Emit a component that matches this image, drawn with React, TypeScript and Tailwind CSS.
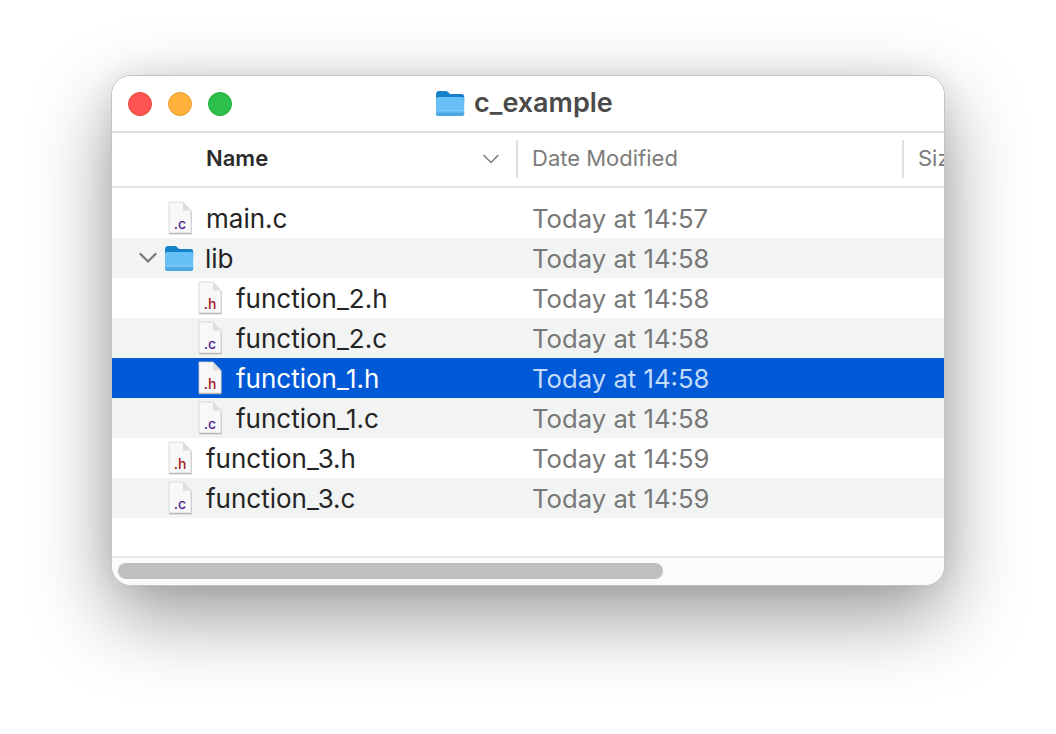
import React from "react";

function Folder({ w, h }: { w: number; h: number }) {
  return (
    <svg width={w} height={h} viewBox="0 0 30 28" className="shrink-0">
      <path d="M1 5.5C1 3.5 2 2 4 2H10.5C12 2 12.5 2.5 13.5 3.5L15 5H26.5C28.2 5 29.2 6 29.2 7.7V14H1Z" fill="#1681c9" />
      <path d="M1 10.2C1 8.8 1.8 8 3.2 8H27C28.4 8 29.2 8.8 29.2 10.2V24.5C29.2 26 28.3 27 26.8 27H3.4C1.9 27 1 26 1 24.5Z" fill="#66c0f6" />
      <rect x="1" y="21" width="28.2" height="1" fill="#7cc9f7" />
      <path d="M1 23.5H29.2V24.5C29.2 26 28.3 27 26.8 27H3.4C1.9 27 1 26 1 24.5Z" fill="#4aa6e2" />
    </svg>
  );
}

function FileIcon({ ext }: { ext: "c" | "h" }) {
  return (
    <div className="relative h-[34px] w-[26px] shrink-0">
      <svg width="26" height="34" viewBox="0 0 26 34" className="absolute left-0 top-0">
        <path d="M2 1.5H16L24.5 10V32.5H2Z" fill="#a8a8a8" transform="translate(0 0.8)" />
        <path d="M2 1H16L24 9.5V32H2Z" fill="#f9f8f9" stroke="#d2d2d2" strokeWidth="0.8" />
        <path d="M16 1V9.5H24Z" fill="#dedede" />
      </svg>
      <span
        className={`absolute bottom-[3px] left-0 right-0 text-center text-[14px] leading-[16px] font-medium ${
          ext === "c" ? "text-[#4c1d95]" : "text-[#a3161c]"
        }`}
      >
        .{ext}
      </span>
    </div>
  );
}

type Row = { name: string; date: string; level: 0 | 1; ext: "c" | "h" | "dir"; shade?: boolean; sel?: boolean };

const rows: Row[] = [
  { name: "main.c", date: "Today at 14:57", level: 0, ext: "c" },
  { name: "lib", date: "Today at 14:58", level: 0, ext: "dir", shade: true },
  { name: "function_2.h", date: "Today at 14:58", level: 1, ext: "h" },
  { name: "function_2.c", date: "Today at 14:58", level: 1, ext: "c", shade: true },
  { name: "function_1.h", date: "Today at 14:58", level: 1, ext: "h", sel: true },
  { name: "function_1.c", date: "Today at 14:58", level: 1, ext: "c", shade: true },
  { name: "function_3.h", date: "Today at 14:59", level: 0, ext: "h" },
  { name: "function_3.c", date: "Today at 14:59", level: 0, ext: "c", shade: true },
];

function FileRow({ r }: { r: Row }) {
  const bg = r.sel ? "bg-[#0059d6]" : r.shade ? "bg-[#f2f4f4]" : "bg-white";
  return (
    <div className={`flex h-10 items-center ${bg}`}>
      <div className={`flex w-[420px] shrink-0 items-center ${r.level === 1 ? "pl-[85px]" : r.ext === "dir" ? "pl-[26px]" : "pl-[55px]"}`}>
        {r.ext === "dir" ? (
          <>
            <svg width="20" height="12" viewBox="0 0 20 12" className="mr-[6px] shrink-0">
              <path d="M2.5 2L10 9.5L17.5 2" fill="none" stroke="#777777" strokeWidth="2.2" strokeLinecap="round" strokeLinejoin="round" />
            </svg>
            <Folder w={30} h={28} />
          </>
        ) : (
          <FileIcon ext={r.ext} />
        )}
        <span className={`pt-[2px] text-[26px] leading-none ${r.ext === "dir" ? "ml-[11px]" : "ml-[13px]"} ${r.sel ? "text-white" : "text-[#242424]"}`}>
          {r.name}
        </span>
      </div>
      <span className={`pt-[2px] text-[25.7px] leading-none ${r.sel ? "text-[#c3dcfa]" : "text-[#777777]"}`}>{r.date}</span>
    </div>
  );
}

export default function App() {
  return (
    <div className="flex h-[734px] w-[1056px] items-start overflow-hidden bg-white pl-[111px] pt-[75px] font-['Inter','Liberation_Sans',sans-serif]">
      <div className="flex h-[511px] w-[834px] flex-col overflow-hidden rounded-[20px] border border-[#c4c4c4] bg-white shadow-[0_30px_80px_rgba(0,0,0,0.4),0_0_30px_rgba(0,0,0,0.08)]">
        <div className="relative flex h-[57px] shrink-0 items-center gap-[16px] border-b-2 border-[#e0e0e0] bg-white pl-[16px]">
          <div className="h-6 w-6 rounded-full border border-[#e0443e] bg-[#ff5552]" />
          <div className="h-6 w-6 rounded-full border border-[#e09e2c] bg-[#ffb13c]" />
          <div className="h-6 w-6 rounded-full border border-[#21a83a] bg-[#2cc04a]" />
          <div className="absolute left-[323px] top-[12px] flex items-center gap-[9px]">
            <Folder w={30} h={28} />
            <span className="text-[27px] leading-[30px] font-semibold text-[#4a4a4a]">c_example</span>
          </div>
        </div>
        <div className="flex h-[55px] shrink-0 items-center border-b-2 border-[#e3e3e3] bg-white pb-[1px]">
          <div className="flex w-[404px] shrink-0 items-center justify-between pl-[94px] pr-[16px]">
            <span className="pb-[2px] text-[22px] leading-none font-semibold text-[#2b2b2b]">Name</span>
            <svg width="18" height="12" viewBox="0 0 18 12">
              <path d="M2 2.5L9 9.5L16 2.5" fill="none" stroke="#808080" strokeWidth="1.6" strokeLinecap="round" strokeLinejoin="round" />
            </svg>
          </div>
          <div className="h-[38px] w-[2px] shrink-0 bg-[#e0e0e0]" />
          <div className="w-[384px] shrink-0 pb-[2px] pl-[14px] text-[22px] leading-none text-[#7c7c7c]">Date Modified</div>
          <div className="h-[38px] w-[2px] shrink-0 bg-[#e0e0e0]" />
          <div className="pb-[2px] pl-[14px] text-[22px] leading-none text-[#7c7c7c]">Siz</div>
        </div>
        <div className="flex-1 bg-white pt-[10px]">
          {rows.map((r) => (
            <FileRow key={r.name} r={r} />
          ))}
        </div>
        <div className="flex h-[29px] shrink-0 items-start border-t-2 border-[#e8e8e8] bg-[#fbfbfb] pl-[6px] pt-[5px]">
          <div className="h-4 w-[545px] rounded-full bg-[#bfbfbf]" />
        </div>
      </div>
    </div>
  );
}
